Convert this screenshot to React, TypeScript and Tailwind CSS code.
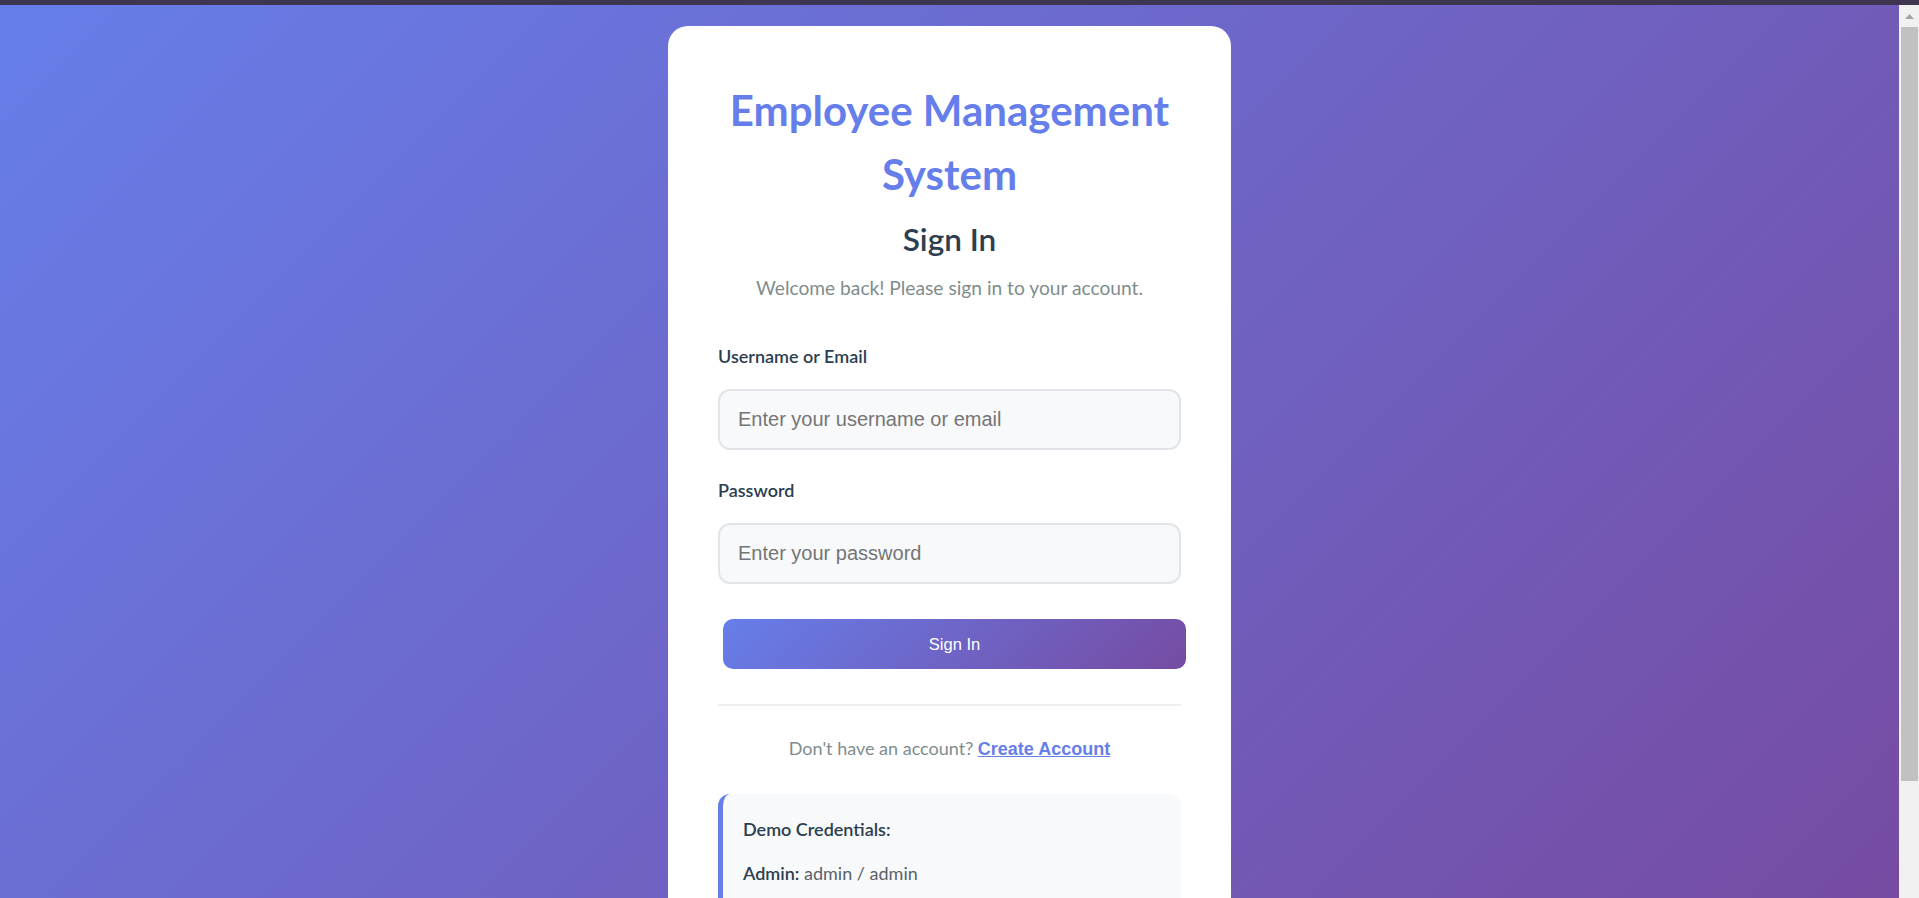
import React from 'react'

const sans = "font-['Lato','Noto_Sans',sans-serif]"
const arial = "font-['Liberation_Sans',Arial,sans-serif]"

function Scrollbar() {
  return (
    <div className='flex w-[20px] shrink-0 flex-col bg-[#f1f1f1]'>
      <div className='flex h-[22px] items-start justify-center pt-[9px] pl-[1px]'>
        <svg width='9' height='5' viewBox='0 0 9 5'>
          <path d='M4.5 0 L9 5 L0 5 Z' fill='#a3a3a3' />
        </svg>
      </div>
      <div className='ml-[2px] mr-[1px] h-[754px] bg-[#c1c1c1]' />
    </div>
  )
}

function App() {
  return (
    <div className={`flex h-screen flex-col overflow-hidden ${sans}`}>
      <div className='h-[5px] shrink-0 bg-[#3e3650]' />
      <div className='flex min-h-0 flex-1'>
        <div className='min-w-0 flex-1 overflow-hidden bg-[linear-gradient(135deg,#667eea_0%,#764ba2_100%)]'>
          <div className='flex justify-center pt-[21px] pb-[25px]'>
            <div className='w-[563px] rounded-[20px] bg-white px-[50px] pt-[50px] pb-[50px]'>
              <h1 className='pt-[2px] text-center text-[42px] leading-[64px] font-bold text-[#667eea]'>
                Employee Management System
              </h1>
              <h2 className='mt-[9px] text-center text-[31.5px] leading-[48px] font-semibold text-[#2c3e50]'>
                Sign In
              </h2>
              <p className='mt-[9px] text-center text-[19.2px] leading-[32px] text-[#7f8c8d]'>
                Welcome back! Please sign in to your account.
              </p>

              <form onSubmit={(e) => e.preventDefault()}>
                <label className='mt-[38px] block text-[18px] leading-[29px] font-semibold text-[#2c3e50]'>
                  Username or Email
                </label>
                <input
                  type='text'
                  placeholder='Enter your username or email'
                  className={`mt-[18px] block h-[61px] w-full rounded-[12px] border-2 border-[#e1e5e9] bg-[#f8f9fa] px-[18px] text-[20px] text-[#2c3e50] outline-none placeholder:text-[#757575] ${arial}`}
                />
                <label className='mt-[26px] block text-[18px] leading-[29px] font-semibold text-[#2c3e50]'>
                  Password
                </label>
                <input
                  type='password'
                  placeholder='Enter your password'
                  className={`mt-[18px] block h-[61px] w-full rounded-[12px] border-2 border-[#e1e5e9] bg-[#f8f9fa] px-[18px] text-[20px] text-[#2c3e50] outline-none placeholder:text-[#757575] ${arial}`}
                />
                <button
                  type='submit'
                  className={`mt-[35px] ml-[5px] block h-[50px] w-full rounded-[10px] bg-[linear-gradient(135deg,#667eea_0%,#764ba2_100%)] text-[16.5px] text-white ${arial}`}
                >
                  Sign In
                </button>
              </form>

              <div className='mt-[35px] h-[2px] bg-[#eceef1]' />

              <p className='mt-[26px] text-center text-[18px] leading-[32px] text-[#7f8c8d]'>
                Don't have an account?{' '}
                <a href='#' className={`text-[18px] font-bold text-[#667eea] underline ${arial}`}>
                  Create Account
                </a>
              </p>

              <div className='mt-[29px] rounded-[12px] border-l-[5px] border-[#667eea] bg-[#f8f9fa] px-[20px] pt-[21px] pb-[52px]'>
                <h3 className='text-[18px] leading-[29px] font-semibold text-[#2c3e50]'>
                  Demo Credentials:
                </h3>
                <p className='mt-[15px] text-[18px] leading-[29px] text-[#5a6268]'>
                  <strong className='font-semibold text-[#2c3e50]'>Admin:</strong> admin / admin
                </p>
              </div>
            </div>
          </div>
        </div>
        <Scrollbar />
      </div>
    </div>
  )
}

export default App
